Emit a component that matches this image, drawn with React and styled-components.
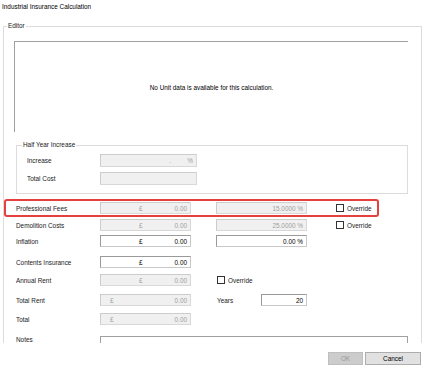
import { createGlobalStyle } from "styled-components";
import styled from "styled-components";

const GlobalStyle = createGlobalStyle`
  html, body {
    margin: 0;
    padding: 0;
    background: #ffffff;
  }
  body {
    font-family: "Liberation Sans", Arial, sans-serif;
    font-size: 6.4px;
    color: #000;
  }
`;

const Dialog = styled.div`
  width: 422px;
  height: 369px;
  display: flex;
  flex-direction: column;
  background: #fff;
  overflow: hidden;
`;

const Title = styled.div`
  height: 14px;
  line-height: 14px;
  padding-left: 2px;
`;

const Body = styled.div`
  height: 329px;
  overflow: hidden;
`;

const Group = styled.fieldset`
  margin: ${(p) => p.$margin || "0"};
  padding: 0;
  border: 1px solid #dcdcdc;
  min-width: 0;
`;

const Legend = styled.legend`
  margin-left: ${(p) => p.$offset || 3}px;
  padding: 0 1px;
  line-height: 8px;
  height: 8px;
  color: #1a1a1a;
`;

const GroupContent = styled.div`
  padding: ${(p) => p.$pad};
`;

const UnitPanel = styled.div`
  height: 90px;
  border-top: 1px solid #a0a0a0;
  border-left: 1px solid #a0a0a0;
  display: flex;
  align-items: center;
  justify-content: center;
`;

const Row = styled.div`
  position: relative;
  display: flex;
  align-items: center;
  height: ${(p) => p.$h || 12}px;
  margin-top: ${(p) => p.$mt || 0}px;
  margin-left: ${(p) => p.$ml || 0}px;

  ${(p) =>
    p.$highlight &&
    `
    &::after {
      content: "";
      position: absolute;
      left: -12px;
      top: -3px;
      width: 375px;
      height: 18px;
      box-sizing: border-box;
      border: 2px solid #e5403e;
      border-radius: 3px;
      pointer-events: none;
    }
  `}
`;

const Label = styled.div`
  width: ${(p) => p.$w || 84}px;
  flex: none;
  color: #1a1a1a;
`;

const Field = styled.div`
  box-sizing: border-box;
  width: ${(p) => p.$w || 91}px;
  height: ${(p) => p.$h || 12}px;
  flex: none;
  display: flex;
  align-items: center;
  justify-content: flex-end;
  padding: 0 3px;
  background: ${(p) => (p.$disabled ? "#f0f0f0" : "#ffffff")};
  border: 1px solid ${(p) => (p.$disabled ? "#cccccc" : "#9a9a9a")};
  border-right-color: ${(p) => (p.$disabled ? "#d8d8d8" : "#c8c8c8")};
  border-bottom-color: ${(p) => (p.$disabled ? "#d8d8d8" : "#c8c8c8")};
  color: ${(p) => (p.$disabled ? "#9e9e9e" : "#000000")};
  white-space: pre;
`;

const Symbol = styled.span`
  margin-right: auto;
  margin-left: ${(p) => (p.$left ? 6 : 35)}px;
`;

const Dot = styled.span`
  margin-right: 16px;
`;

const Spacer = styled.div`
  width: ${(p) => p.$w}px;
  flex: none;
`;

const Check = styled.span`
  box-sizing: border-box;
  width: 8px;
  height: 8px;
  border: 1px solid #333;
  background: #fff;
  margin-right: 3px;
  flex: none;
`;

const CheckText = styled.span`
  color: #1a1a1a;
`;

const NotesRow = styled.div`
  display: flex;
  align-items: flex-start;
  margin-top: 11px;
`;

const Notes = styled.div`
  width: 308px;
  height: 60px;
  flex: none;
  box-sizing: border-box;
  border: 1px solid #a0a0a0;
  background: #fff;
`;

const Footer = styled.div`
  flex: 1;
  display: flex;
  justify-content: flex-end;
  align-items: flex-start;
  gap: 2px;
  padding: 9px 1px 0 0;
`;

const Button = styled.div`
  box-sizing: border-box;
  width: ${(p) => p.$w}px;
  height: 13px;
  display: flex;
  align-items: center;
  justify-content: center;
  background: ${(p) => (p.$disabled ? "#cccccc" : "#e1e1e1")};
  border: 1px solid ${(p) => (p.$disabled ? "#bfbfbf" : "#adadad")};
  color: ${(p) => (p.$disabled ? "#9a9a9a" : "#000")};
`;

function Money({ value = "0.00", disabled, left }) {
  return (
    <Field $disabled={disabled}>
      <Symbol $left={left}>£</Symbol>
      {value}
    </Field>
  );
}

function Override() {
  return (
    <>
      <Check />
      <CheckText>Override</CheckText>
    </>
  );
}

export default function App() {
  return (
    <>
      <GlobalStyle />
      <Dialog>
        <Title>Industrial Insurance Calculation</Title>
        <Body>
          <Group $margin="8px 0 0 3px">
            <Legend $offset={3}>Editor</Legend>
            <GroupContent $pad="11px 13px 0 10px">
              <UnitPanel>No Unit data is available for this calculation.</UnitPanel>

              <Group $margin="9px 0 0 2px">
                <Legend $offset={5}>Half Year Increase</Legend>
                <GroupContent $pad="5px 0 8px 10px">
                  <Row $h={13}>
                    <Label $w={73}>Increase</Label>
                    <Field $disabled $w={97} $h={13}>
                      <Dot>.</Dot>%
                    </Field>
                  </Row>
                  <Row $h={13} $mt={5}>
                    <Label $w={73}>Total Cost</Label>
                    <Field $disabled $w={97} $h={13} />
                  </Row>
                </GroupContent>
              </Group>

              <Row $mt={8} $ml={2} $highlight>
                <Label>Professional Fees</Label>
                <Money disabled />
                <Spacer $w={25} />
                <Field $disabled>15.0000 %</Field>
                <Spacer $w={29} />
                <Override />
              </Row>
              <Row $mt={5} $ml={2}>
                <Label>Demolition Costs</Label>
                <Money disabled />
                <Spacer $w={25} />
                <Field $disabled>25.0000 %</Field>
                <Spacer $w={29} />
                <Override />
              </Row>
              <Row $mt={4} $ml={2}>
                <Label>Inflation</Label>
                <Money />
                <Spacer $w={25} />
                <Field>0.00 %</Field>
              </Row>
              <Row $mt={9} $ml={2}>
                <Label>Contents Insurance</Label>
                <Money />
              </Row>
              <Row $mt={6} $ml={2}>
                <Label>Annual Rent</Label>
                <Money disabled />
                <Spacer $w={26} />
                <Override />
              </Row>
              <Row $mt={8} $ml={2}>
                <Label>Total Rent</Label>
                <Money disabled left />
                <Spacer $w={26} />
                <Label $w={44}>Years</Label>
                <Field $w={46}>20</Field>
              </Row>
              <Row $mt={7} $ml={2}>
                <Label>Total</Label>
                <Money disabled left />
              </Row>
              <NotesRow>
                <Spacer $w={2} />
                <Label>Notes</Label>
                <Notes />
              </NotesRow>
            </GroupContent>
          </Group>
        </Body>
        <Footer>
          <Button $w={35} $disabled>OK</Button>
          <Button $w={56}>Cancel</Button>
        </Footer>
      </Dialog>
    </>
  );
}
